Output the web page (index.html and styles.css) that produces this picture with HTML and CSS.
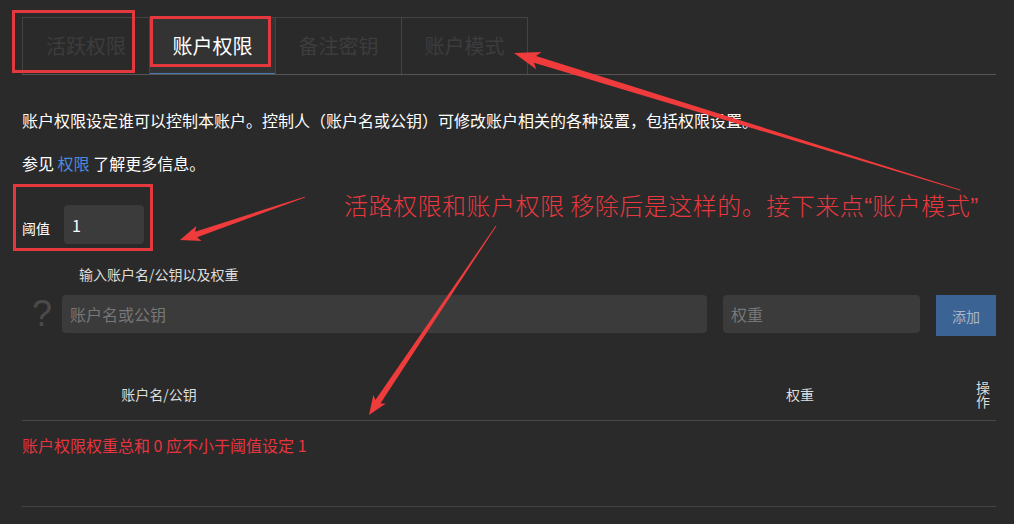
FILE: index.html
```html
<!DOCTYPE html>
<html lang="zh-CN">
<head>
<meta charset="utf-8">
<title>账户权限</title>
<link rel="stylesheet" href="styles.css">
</head>
<body>
<div class="page">
  <div class="tabs">
    <div class="tab">活跃权限</div>
    <div class="tab active">账户权限</div>
    <div class="tab">备注密钥</div>
    <div class="tab">账户模式</div>
  </div>

  <p class="intro">账户权限设定谁可以控制本账户。控制人（账户名或公钥）可修改账户相关的各种设置，包括权限设置。</p>
  <p class="more">参见 <a class="link">权限</a> 了解更多信息。</p>

  <div class="threshold">
    <label class="thr-label">阈值</label>
    <input class="field thr-input" type="text" value="1">
  </div>

  <div class="hint">输入账户名/公钥以及权重</div>

  <div class="add-row">
    <span class="help">?</span>
    <input class="field name-input" type="text" placeholder="账户名或公钥">
    <input class="field weight-input" type="text" placeholder="权重">
    <button class="btn-add">添加</button>
  </div>

  <div class="thead">
    <div class="th">账户名/公钥</div>
    <div class="th"></div>
    <div class="th">权重</div>
    <div class="th ops">操作</div>
  </div>

  <div class="error">账户权限权重总和 0 应不小于阈值设定 1</div>
  <div class="rule"></div>
</div>

<svg class="overlay" width="1014" height="524" viewBox="0 0 1014 524">
  <g fill="none" stroke="#e3393e" stroke-width="3">
    <rect x="13.5" y="11.5" width="120" height="60"/>
    <rect x="151.5" y="17.5" width="118" height="48"/>
    <rect x="14.5" y="185.5" width="137" height="64"/>
  </g>
  <g fill="#f03b3c">
    <polygon transform="translate(514,53) rotate(17.07)" points="0,0 26,-9 22,-3.5 467,-0.4 467,0.4 22,3.5 26,9"/>
    <polygon transform="translate(180,240) rotate(-18.98)" points="0,0 20,-8 17,-3 132,-0.4 132,0.4 17,3 20,8"/>
    <polygon transform="translate(369,415) rotate(-56.1)" points="0,0 19,-7.5 16,-3 228,-0.4 228,0.4 16,3 19,7.5"/>
  </g>
</svg>
<div class="note">活路权限和账户权限 移除后是这样的。接下来点<span class="q">“</span>账户模式<span class="q">”</span></div>
</body>
</html>
```

FILE: styles.css
```css
* { box-sizing: border-box; }
html, body { margin: 0; padding: 0; }
body {
  width: 1014px;
  height: 524px;
  background: #2a2a2a;
  font-family: "Noto Sans CJK SC", "Liberation Sans", sans-serif;
  color: #fff;
  position: relative;
  overflow: hidden;
}
.page { padding: 17px 18px 0 22px; }

.tabs {
  display: flex;
  height: 58px;
  border-bottom: 1px solid #555;
}
.tab {
  width: 126px;
  height: 57px;
  border: 1px solid #444;
  border-left: none;
  border-bottom: none;
  display: flex;
  align-items: center;
  justify-content: center;
  font-size: 20px;
  line-height: 24px;
  color: #3d3d3d;
}
.tab:first-child { width: 128px; border-left: 1px solid #444; }
.tab.active {
  background: #333;
  color: #fff;
  box-shadow: inset 0 -1px 0 #4a79b4;
}

.intro, .more {
  margin: 0;
  font-size: 16px;
  line-height: 24px;
  color: #fff;
}
.intro { margin-top: 33px; }
.more { margin-top: 19px; }
.link { color: #4a8be0; }

.field {
  background: #3b3b3b;
  border: none;
  border-radius: 4px;
  font-family: inherit;
  font-size: 16px;
  color: #fff;
  outline: none;
  padding: 0 8px;
}
.field::placeholder { color: #777; }

.threshold {
  margin-top: 30px;
  display: flex;
  align-items: center;
  gap: 12px;
}
.thr-label {
  font-size: 14px;
  line-height: 20px;
  margin-top: 6px;
  color: #fff;
  width: 30px;
}
.thr-input { width: 80px; height: 39px; }

.hint {
  margin-top: 20px;
  padding-left: 57px;
  font-size: 14px;
  line-height: 20px;
  color: #ddd;
}

.add-row {
  margin-top: 11px;
  display: flex;
  align-items: flex-start;
}
.help {
  width: 40px;
  height: 38px;
  text-align: center;
  font-family: "Liberation Sans", sans-serif;
  font-size: 36px;
  line-height: 38px;
  color: #4a4a4a;
}
.name-input { flex: 1; height: 38px; }
.weight-input { width: 197px; height: 38px; margin-left: 16px; }
.btn-add {
  width: 60px;
  height: 41px;
  margin-left: 16px;
  border: none;
  background: #3b6495;
  color: #a9b5c6;
  font-family: inherit;
  font-size: 14px;
  padding: 0;
}

.thead {
  margin-top: 31px;
  height: 54px;
  border-bottom: 1px solid #4a4a4a;
  display: grid;
  grid-template-columns: 274px 1fr 340px 26px;
  align-items: center;
  text-align: center;
  font-size: 14px;
  line-height: 20px;
  color: #ddd;
}
.ops { line-height: 14px; }

.error {
  margin-top: 12px;
  font-size: 16px;
  line-height: 24px;
  color: #e5343f;
}
.rule {
  margin-top: 49px;
  border-top: 1px solid #444;
}

.overlay {
  position: absolute;
  top: 0;
  left: 0;
  pointer-events: none;
}
.note {
  position: absolute;
  left: 344px;
  top: 191px;
  font-size: 24px;
  font-weight: 300;
  line-height: 28px;
  letter-spacing: 0.5px;
  color: #e8383f;
  white-space: nowrap;
}
.note .q {
  font-family: "Liberation Sans", sans-serif;
  letter-spacing: 0;
}
```
